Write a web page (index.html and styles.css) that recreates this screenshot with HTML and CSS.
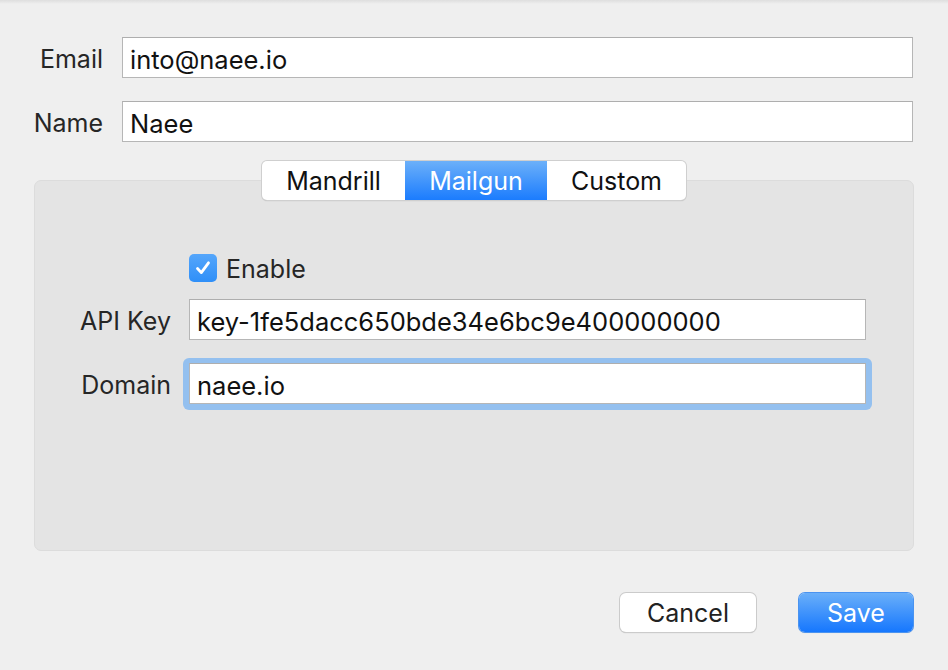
FILE: index.html
```html
<!DOCTYPE html>
<html>
<head>
<meta charset="utf-8">
<link rel="stylesheet" href="styles.css">
</head>
<body>
<div class="window">
  <div class="topline"></div>
  <div class="form">
    <label class="lbl">Email</label>
    <div class="field">into@naee.io</div>
    <label class="lbl">Name</label>
    <div class="field">Naee</div>
  </div>
  <div class="panel">
    <div class="seg">
      <div class="seg-item s1">Mandrill</div>
      <div class="seg-item s2 active">Mailgun</div>
      <div class="seg-item s3">Custom</div>
    </div>
    <div class="panel-body">
      <div></div>
      <div class="check">
        <span class="box"><svg width="20" height="20" viewBox="0 0 20 20"><path d="M4.5 10.5 L8.3 14.6 L15.5 4.8" fill="none" stroke="#fff" stroke-width="2.8" stroke-linecap="round" stroke-linejoin="round"/></svg></span>
        <span>Enable</span>
      </div>
      <label class="lbl">API Key</label>
      <div class="field">key-1fe5dacc650bde34e6bc9e400000000</div>
      <label class="lbl dom">Domain</label>
      <div class="focus"><div class="field">naee.io</div></div>
    </div>
  </div>
  <div class="buttons">
    <button class="btn cancel">Cancel</button>
    <button class="btn save">Save</button>
  </div>
</div>
</body>
</html>
```
FILE: styles.css
```css
* { box-sizing: border-box; }
html, body { margin: 0; padding: 0; }
body {
  background: #efefef;
  font-family: "Inter", "Liberation Sans", sans-serif;
  font-size: 25px;
  color: #262626;
  width: 948px;
  height: 670px;
  overflow: hidden;
}
.window { position: relative; height: 670px; }
.topline {
  height: 4px;
  background: linear-gradient(#dedede, #efefef);
}
.form {
  display: grid;
  grid-template-columns: 103px 791px;
  column-gap: 19px;
  row-gap: 23px;
  margin-top: 33px;
  align-items: center;
}
.lbl {
  text-align: right;
  color: #262626;
  white-space: nowrap;
  padding-top: 2px;
}
.field {
  height: 41px;
  background: #fff;
  border: 1px solid #b6b6b6;
  border-top-color: #aeaeae;
  padding: 4px 7px 0;
  line-height: 35px;
  font-size: 25.5px;
  color: #111;
  white-space: nowrap;
  overflow: hidden;
}
.panel {
  margin: 38px 34px 0 34px;
  height: 371px;
  background: #e4e4e4;
  border: 1px solid #dcdcdc;
  border-radius: 7px;
  position: relative;
}
.seg {
  display: flex;
  width: 424px;
  height: 39px;
  margin: -20px auto 0;
  background: #fff;
  border-radius: 5px;
  box-shadow: 0 0 0 1px #cfcfcf, 0 1px 1px rgba(0,0,0,0.25);
  overflow: hidden;
}
.seg-item {
  display: flex;
  align-items: center;
  justify-content: center;
  color: #111;
  font-size: 25px;
  padding-top: 1px;
}
.s1 { width: 143px; }
.s2 { width: 142px; }
.s3 { width: 139px; }
.seg-item.active {
  background: linear-gradient(#6cb0f9, #1b7cfe);
  color: #fff;
}
.panel-body {
  display: grid;
  grid-template-columns: 136px 677px;
  column-gap: 18px;
  row-gap: 0;
  margin-top: 54px;
  align-items: center;
}
.check {
  display: flex;
  align-items: center;
  gap: 9px;
  height: 28px;
  margin-bottom: 17px;
  padding-top: 2px;
}
.box {
  width: 28px;
  height: 28px;
  border-radius: 5px;
  background: linear-gradient(#55a6fb, #2f8ff8);
  display: flex;
  align-items: center;
  justify-content: center;
  margin-top: -2px;
}
.box svg { display: block; }
.focus {
  margin: 18px -6px 0 -6px;
  padding: 5px 6px 6px 6px;
  border-radius: 6px;
  background: #94c0ef;
}
.lbl.dom { margin-top: 18px; }
.buttons {
  display: flex;
  justify-content: flex-end;
  gap: 43px;
  margin: 42px 35px 0 0;
}
.btn {
  font-family: "Inter", "Liberation Sans", sans-serif;
  font-size: 25px;
  height: 39px;
  border-radius: 6px;
  padding: 1px 0 0;
  display: flex;
  align-items: center;
  justify-content: center;
}
.cancel {
  width: 136px;
  background: #fff;
  color: #222;
  border: none;
  box-shadow: 0 0 0 1px #cbcbcb, 0 1px 1px rgba(0,0,0,0.25);
}
.save {
  width: 114px;
  color: #fff;
  border: none;
  background: linear-gradient(#6aaff9, #1677fe);
  box-shadow: 0 0 0 1px #4a93f0, 0 1px 1px rgba(0,0,0,0.15);
}
```
